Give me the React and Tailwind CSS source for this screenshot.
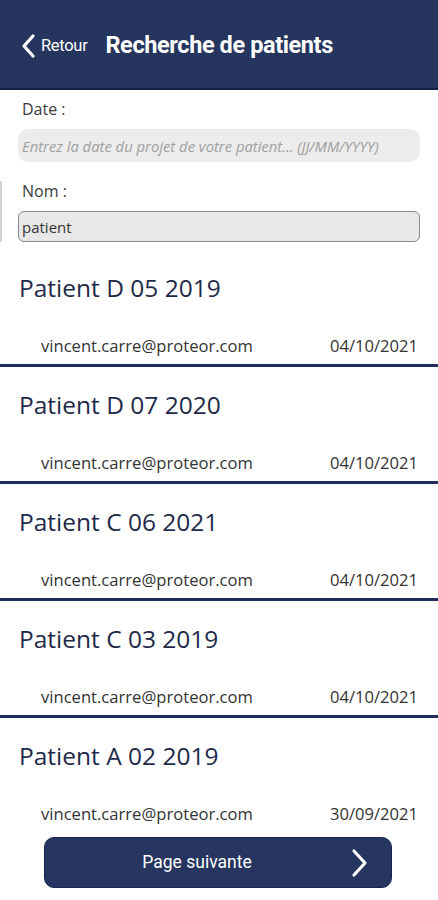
import { useState } from "react";

const patients = [
  { nom: "Patient D 05 2019", email: "vincent.carre@proteor.com", date: "04/10/2021" },
  { nom: "Patient D 07 2020", email: "vincent.carre@proteor.com", date: "04/10/2021" },
  { nom: "Patient C 06 2021", email: "vincent.carre@proteor.com", date: "04/10/2021" },
  { nom: "Patient C 03 2019", email: "vincent.carre@proteor.com", date: "04/10/2021" },
  { nom: "Patient A 02 2019", email: "vincent.carre@proteor.com", date: "30/09/2021" },
];

export default function App() {
  const [date, setDate] = useState("");
  const [nom, setNom] = useState("patient");

  return (
    <div className="w-[438px] h-[900px] overflow-hidden bg-white font-['Open_Sans',sans-serif]">
      {/* Header */}
      <div className="h-[90px] bg-[#26355e] border-b-[2px] border-[#141f48] flex items-center pl-[20px] pt-[4px]">
        <button className="flex items-center text-white">
          <svg width="18" height="26" viewBox="0 0 18 26" fill="none">
            <polyline points="13,3 4,13 13,23" stroke="white" strokeWidth="3.2" strokeLinecap="round" strokeLinejoin="round" />
          </svg>
          <span className="ml-[3px] text-[16.5px] font-['Roboto',sans-serif] tracking-[-0.3px]">Retour</span>
        </button>
        <h1 className="ml-[18px] text-white text-[23.5px] font-bold font-['Roboto',sans-serif] tracking-[-0.4px]">
          Recherche de patients
        </h1>
      </div>

      {/* Formulaire */}
      <div className="pt-[9px]">
        <div className="pl-[18px] pr-[18px]">
          <label className="block pl-[4px] text-[16px] leading-[20px] text-[#3a3a3a]">Date :</label>
          <input
            value={date}
            onChange={(e) => setDate(e.target.value)}
            placeholder="Entrez la date du projet de votre patient... (JJ/MM/YYYY)"
            className="mt-[10px] w-full h-[33px] rounded-[10px] bg-[#ececec] px-[4px] text-[14.8px] italic text-[#999] placeholder:text-[#a0a0a0] outline-none"
          />
        </div>
        <div className="mt-[19px] border-l-[2px] border-[#d4d4d4] pl-[16px] pr-[18px]">
          <label className="block pl-[4px] text-[16px] leading-[20px] text-[#3a3a3a]">Nom :</label>
          <input
            value={nom}
            onChange={(e) => setNom(e.target.value)}
            className="mt-[10px] w-full h-[31px] rounded-[6px] bg-[#e8e8e8] border-[1.5px] border-[#8a8a8a] px-[3px] text-[15px] text-[#333] outline-none"
          />
        </div>
      </div>

      {/* Liste */}
      <div className="mt-[8px]">
        {patients.map((p, i) => (
          <div key={i}>
            <div className="pt-[23px] px-[19px]">
              <p className="text-[24.5px] leading-[30px] text-[#1f2a4a]">{p.nom}</p>
              <div className="mt-[33px] flex justify-between pl-[22px] pr-0 text-[16.6px] leading-[20px] text-[#333]">
                <span>{p.email}</span>
                <span className="pr-[1px]">{p.date}</span>
              </div>
            </div>
            {i < patients.length - 1 && <div className="mt-[8px] h-[3px] bg-[#1e2c5c]" />}
          </div>
        ))}
      </div>

      {/* Pagination */}
      <div className="mt-[13px] flex justify-center pr-[2px]">
        <button className="w-[348px] h-[51px] rounded-[10px] bg-[#263660] border border-[#1a2650] flex items-center text-white">
          <span className="flex-1 text-[17.5px] font-['Roboto',sans-serif]">Page suivante</span>
          <svg width="20" height="30" viewBox="0 0 20 30" fill="none" className="mr-[22px]">
            <polyline points="5,3 16,15 5,27" stroke="white" strokeWidth="3.2" strokeLinecap="round" strokeLinejoin="round" />
          </svg>
        </button>
      </div>
    </div>
  );
}
